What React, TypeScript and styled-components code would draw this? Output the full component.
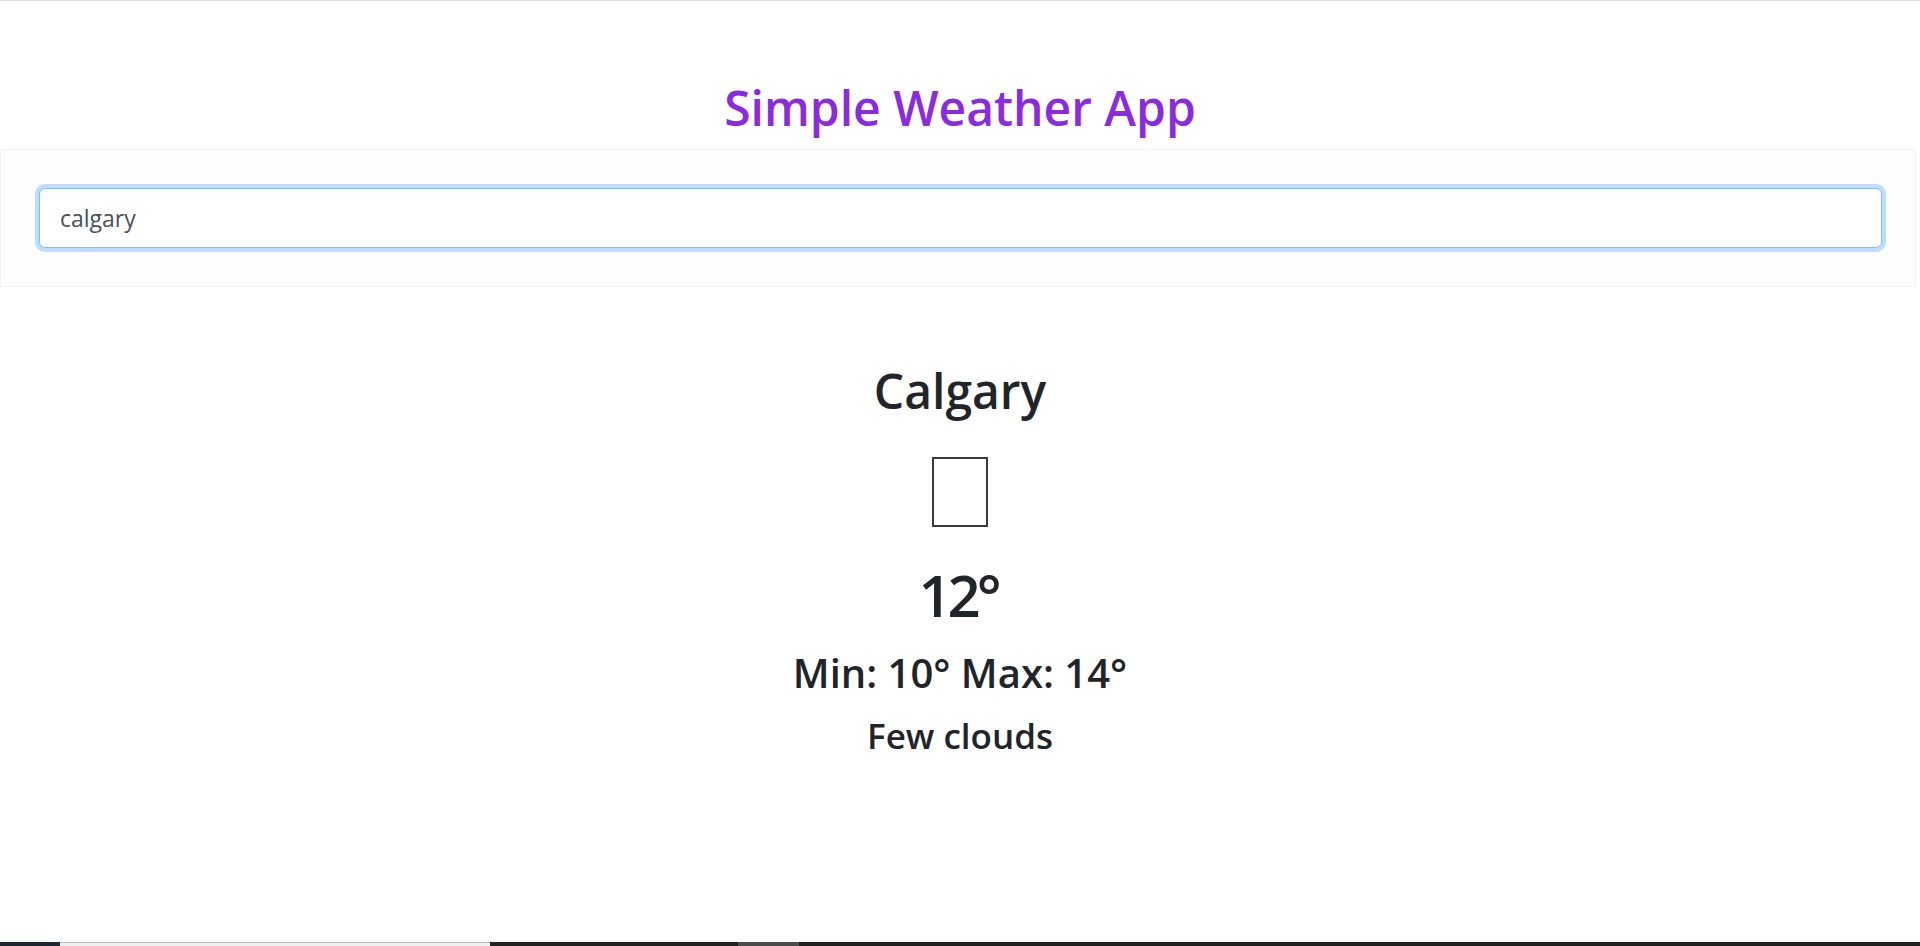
import React from "react";
import styled, { createGlobalStyle } from "styled-components";

const GlobalStyle = createGlobalStyle`
  html, body { margin: 0; padding: 0; background: #ffffff; }
  body { font-family: "Open Sans", "Noto Sans", sans-serif; color: #212529; }
  #root { min-height: 100vh; }
`;

const Page = styled.div`
  min-height: 100vh;
  display: flex;
  flex-direction: column;
  box-sizing: border-box;
  border-top: 1px solid #dcdcdc;
`;

const Main = styled.main`
  flex: 1;
  display: flex;
  flex-direction: column;
`;

const Title = styled.h1`
  margin: 0;
  padding: 83px 0 17px;
  text-align: center;
  font-size: 48px;
  font-weight: 600;
  line-height: 1;
  color: #8a2be2;
`;

const SearchCard = styled.section`
  margin: 0 4px 0 0;
  padding: 38px 33px 38px 38px;
  border: 1px solid #f2f2f2;
  background: #fefefe;
`;

const SearchInput = styled.input`
  display: block;
  width: 100%;
  box-sizing: border-box;
  height: 60px;
  padding: 0 20px;
  font-family: "Open Sans", "Noto Sans", sans-serif;
  font-size: 23px;
  color: #495057;
  caret-color: #111;
  background: #fff;
  border: 1px solid #80bdff;
  border-radius: 6px;
  box-shadow: 0 0 0 4px rgba(0, 123, 255, 0.25);
  outline: none;
`;

const Weather = styled.div`
  display: flex;
  flex-direction: column;
  align-items: center;
  padding-top: 80px;
`;

const City = styled.h2`
  margin: 0;
  font-size: 48px;
  font-weight: 600;
  line-height: 1;
`;

const IconGlyph = styled.span`
  display: block;
  width: 56px;
  height: 70px;
  box-sizing: border-box;
  border: 2px solid #3a3a3a;
  margin-top: 42px;
`;

const Temp = styled.div`
  margin-top: 39px;
  font-size: 58px;
  font-weight: 600;
  line-height: 1;
  letter-spacing: -4px;
  text-indent: -4px;
`;

const Range = styled.div`
  margin-top: 29px;
  font-size: 40px;
  font-weight: 600;
  line-height: 1;
`;

const Description = styled.div`
  margin-top: 25px;
  font-size: 35px;
  font-weight: 600;
  line-height: 1;
`;

const Taskbar = styled.div`
  height: 4px;
  display: flex;
  background: #202020;
`;

const TaskSeg = styled.div<{ $w: number; $bg: string; $edge?: string }>`
  width: ${(p) => p.$w}px;
  background: ${(p) => p.$bg};
  box-sizing: border-box;
  border-top: ${(p) => (p.$edge ? `1px solid ${p.$edge}` : "none")};
`;

export default function App() {
  return (
    <>
      <GlobalStyle />
      <Page>
        <Main>
          <Title>Simple Weather App</Title>
          <SearchCard>
            <SearchInput defaultValue="calgary" aria-label="City" autoFocus />
          </SearchCard>
          <Weather>
            <City>Calgary</City>
            <IconGlyph />
            <Temp>12°</Temp>
            <Range>Min: 10° Max: 14°</Range>
            <Description>Few clouds</Description>
          </Weather>
        </Main>
        <Taskbar>
          <TaskSeg $w={60} $bg="#1d2631" />
          <TaskSeg $w={430} $bg="#efefef" $edge="#bdbdbd" />
          <TaskSeg $w={248} $bg="#222222" />
          <TaskSeg $w={61} $bg="#4b4b4b" />
        </Taskbar>
      </Page>
    </>
  );
}
